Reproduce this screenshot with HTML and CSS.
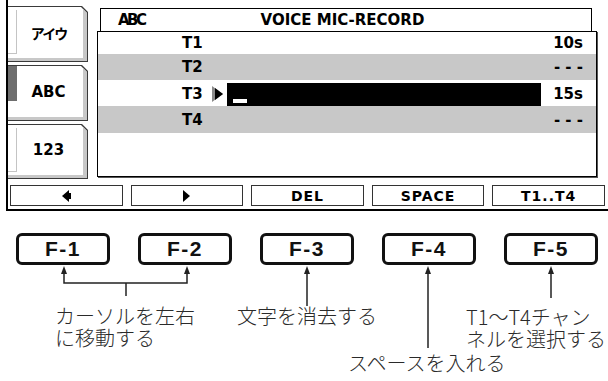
FILE: index.html
```html
<!DOCTYPE html>
<html lang="ja">
<head>
  <meta charset="UTF-8" />
  <meta name="viewport" content="width=device-width, initial-scale=1.0"/>
  <title>VOICE MIC-RECORD</title>
  <link rel="stylesheet" href="styles.css">
</head>
<body>
  <div class="lcd">
    <div class="lcd-top">
      <div class="tabs">
        <div class="tab tab-1">
          <div class="tab-face">
            <span class="tab-mark"></span>
            <span class="tab-label kana">アイウ</span>
          </div>
        </div>
        <div class="tab tab-2">
          <div class="tab-face">
            <span class="tab-mark active"></span>
            <span class="tab-label">ABC</span>
          </div>
        </div>
        <div class="tab tab-3">
          <div class="tab-face">
            <span class="tab-mark"></span>
            <span class="tab-label">123</span>
          </div>
        </div>
      </div>

      <div class="screen">
        <div class="screen-head">
          <span class="head-mode">ABC</span>
          <span class="head-title">VOICE MIC-RECORD</span>
        </div>
        <div class="screen-body">
          <div class="row row-1">
            <span class="row-name">T1</span>
            <span></span>
            <span></span>
            <span class="row-value">10s</span>
          </div>
          <div class="row row-2 shade">
            <span class="row-name">T2</span>
            <span></span>
            <span></span>
            <span class="row-value">- - -</span>
          </div>
          <div class="row row-3">
            <span class="row-name">T3</span>
            <span class="row-pointer">
              <svg width="12" height="16" viewBox="0 0 12 16">
                <polygon points="0,0 11,8 0,16" fill="#8a8a8a"/>
                <polygon points="3,2 11,8 3,14" fill="#000"/>
              </svg>
            </span>
            <span class="row-field"><span class="caret"></span></span>
            <span class="row-value">15s</span>
          </div>
          <div class="row row-4 shade">
            <span class="row-name">T4</span>
            <span></span>
            <span></span>
            <span class="row-value">- - -</span>
          </div>
        </div>
      </div>
    </div>

    <div class="fn-bar">
      <div class="fn-btn">
        <svg width="9" height="12" viewBox="0 0 9 12">
          <polygon points="0,6 7,0 7,12" fill="#000"/>
          <rect x="7" y="3" width="2" height="6" fill="#000"/>
        </svg>
      </div>
      <div class="fn-btn">
        <svg width="7" height="12" viewBox="0 0 7 12">
          <polygon points="0,0 7,6 0,12" fill="#000"/>
        </svg>
      </div>
      <div class="fn-btn">DEL</div>
      <div class="fn-btn">SPACE</div>
      <div class="fn-btn">T1..T4</div>
    </div>
  </div>

  <div class="fkeys">
    <div class="fkey">F-1</div>
    <div class="fkey">F-2</div>
    <div class="fkey">F-3</div>
    <div class="fkey">F-4</div>
    <div class="fkey">F-5</div>
  </div>

  <div class="notes">
    <svg class="note-lines" width="608" height="116" viewBox="0 0 608 116">
      <g stroke="#222" stroke-width="1.5" fill="none">
        <path d="M64 8 V18 H187 V8"/>
        <path d="M126 18 V31"/>
        <path d="M307 8 V41"/>
        <path d="M428 8 V83"/>
        <path d="M551 8 V33"/>
      </g>
      <g fill="#222">
        <polygon points="64,1 61,9 67,9"/>
        <polygon points="187,1 184,9 190,9"/>
        <polygon points="307,1 304,9 310,9"/>
        <polygon points="428,1 425,9 431,9"/>
        <polygon points="551,1 548,9 554,9"/>
      </g>
    </svg>
    <div class="note note-move">
      <div>カーソルを左右</div>
      <div>に移動する</div>
    </div>
    <div class="note note-del">文字を消去する</div>
    <div class="note note-space">スペースを入れる</div>
    <div class="note note-ch">
      <div>T1〜T4チャン</div>
      <div>ネルを選択する</div>
    </div>
  </div>
</body>
</html>
```

FILE: styles.css
```css
body {
  margin: 0;
  width: 608px;
  height: 381px;
  background: #fff;
  font-family: 'DejaVu Sans', sans-serif;
  color: #000;
  overflow: hidden;
}

/* LCD panel */
.lcd {
  margin-left: 6px;
  border-left: 2px solid #000;
  border-bottom: 2px solid #000;
  display: flex;
  flex-direction: column;
  padding-bottom: 3px;
}

.lcd-top {
  display: flex;
  height: 179px;
}

.tabs {
  width: 80px;
  padding-top: 6px;
  display: flex;
  flex-direction: column;
  gap: 3px;
}

.tab {
  height: 56px;
  background: #3a3a3a;
  padding: 1px 1px 1px 0;
  box-sizing: border-box;
  clip-path: polygon(0 0, calc(100% - 6px) 0, 100% 6px, 100% 100%, 0 100%);
}

.tab-3 {
  height: 55px;
}

.tab-face {
  height: 100%;
  box-sizing: border-box;
  background: #fff;
  border-right: 4px solid #c8c8c8;
  border-bottom: 3px solid #c8c8c8;
  clip-path: polygon(0 0, calc(100% - 6px) 0, 100% 6px, 100% 100%, 0 100%);
  display: flex;
  align-items: flex-start;
}

.tab-mark {
  width: 9px;
  height: 44px;
  margin-top: 3px;
  box-sizing: border-box;
  border-right: 1px solid #c4c4c4;
  border-bottom: 1px solid #c4c4c4;
  flex: none;
}

.tab-mark.active {
  height: 35px;
  margin-top: 0;
  background: #6e6e6e;
  border: none;
}

.tab-label {
  flex: 1;
  align-self: center;
  text-align: center;
  font-weight: bold;
  font-size: 15px;
  padding-right: 3px;
}

.tab-label.kana {
  font-family: 'Noto Sans CJK JP', sans-serif;
  font-size: 14px;
  letter-spacing: -2px;
}

.screen {
  margin-left: 9px;
  padding-top: 8px;
  display: flex;
  flex-direction: column;
}

.screen-head {
  margin-left: 3px;
  width: 492px;
  height: 23px;
  box-sizing: border-box;
  border: 1px solid #000;
  border-bottom: none;
  display: flex;
  align-items: center;
  font-weight: bold;
  font-size: 15px;
}

.head-mode {
  margin-left: 17px;
  font-size: 15px;
  letter-spacing: -2.5px;
}

.head-title {
  margin-left: 116px;
}

.screen-body {
  width: 500px;
  height: 146px;
  box-sizing: border-box;
  border: 1px solid #000;
  box-shadow: 1px 1px 0 #555;
}

.row {
  display: grid;
  grid-template-columns: 84px 30px 15px 1fr 55px;
  align-items: center;
  font-weight: bold;
  font-size: 15px;
}

.row-1 { height: 22px; }
.row-2 { height: 26px; }
.row-3 { height: 26px; align-items: end; }
.row-4 { height: 27px; }

.shade {
  background: #c8c8c8;
}

.row-name {
  grid-column: 2;
}

.row-value {
  grid-column: 5;
  text-align: right;
  padding-right: 13px;
  white-space: pre;
}

.row-3 .row-name,
.row-3 .row-value {
  align-self: center;
  padding-top: 2px;
}

.row-pointer {
  grid-column: 3;
  display: flex;
  align-self: center;
  padding-top: 2px;
}

.row-field {
  grid-column: 4;
  height: 23px;
  background: #000;
  display: flex;
  align-items: flex-end;
}

.caret {
  width: 14px;
  height: 4px;
  margin: 0 0 3px 6px;
  background: #fff;
}

/* function key labels on LCD */
.fn-bar {
  margin: 6px 0 0 2px;
  width: 595px;
  height: 21px;
  display: flex;
  gap: 8px;
}

.fn-btn {
  flex: 1;
  box-sizing: border-box;
  border: 1px solid #333;
  display: flex;
  align-items: center;
  justify-content: center;
  font-weight: bold;
  font-size: 14px;
  letter-spacing: 1px;
}

/* hardware keys */
.fkeys {
  margin: 22px 0 0 16px;
  display: flex;
  gap: 28px;
}

.fkey {
  width: 94px;
  height: 32px;
  box-sizing: border-box;
  border: 3px solid #111;
  border-radius: 6px;
  display: flex;
  align-items: center;
  justify-content: center;
  font-family: 'Liberation Sans', Arial, sans-serif;
  font-weight: bold;
  font-size: 21px;
  letter-spacing: 1.5px;
  color: #111;
}

/* annotations */
.notes {
  position: relative;
  height: 116px;
}

.note-lines {
  position: absolute;
  left: 0;
  top: 0;
}

.note {
  position: absolute;
  font-family: 'Noto Sans CJK JP', sans-serif;
  font-weight: 300;
  font-size: 20px;
  line-height: 22px;
  color: #2a2a2a;
  white-space: nowrap;
}

.note-move { left: 55px; top: 40px; }
.note-del { left: 237px; top: 40px; }
.note-space { left: 348px; top: 87px; }
.note-ch { left: 466px; top: 41px; }
```
